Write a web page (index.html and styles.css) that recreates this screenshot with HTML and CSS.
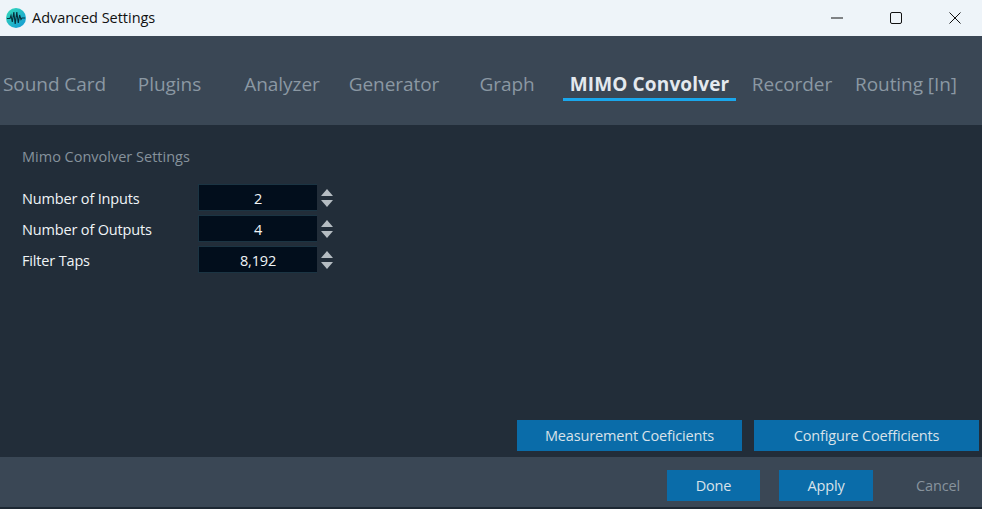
FILE: index.html
```html
<!DOCTYPE html>
<html lang="en">
<head>
<meta charset="utf-8">
<title>Advanced Settings</title>
<link rel="stylesheet" href="styles.css">
</head>
<body>
<div class="window">
  <header class="titlebar">
    <svg class="app-icon" width="20" height="20" viewBox="0 0 20 20">
      <defs><linearGradient id="g" x1="0" y1="0" x2="1" y2="1"><stop offset="0" stop-color="#35dcb8"/><stop offset="1" stop-color="#1296d6"/></linearGradient></defs>
      <circle cx="10" cy="10" r="10" fill="url(#g)"/>
      <path d="M1 10.5H4L5 7.5 6.3 14 7.8 4 9.2 16 10.8 4 12.3 15 13.6 7 15 11.5 16 10H19" fill="none" stroke="#06303c" stroke-width="1.1"/>
    </svg>
    <span class="title">Advanced Settings</span>
    <div class="win-controls">
      <svg class="win-btn" width="12" height="12" viewBox="0 0 12 12"><path d="M0 6H12" stroke="#111" fill="none"/></svg>
      <svg class="win-btn" width="12" height="12" viewBox="0 0 12 12"><rect x=".5" y=".5" width="11" height="11" rx="1.5" stroke="#111" fill="none"/></svg>
      <svg class="win-btn" width="12" height="12" viewBox="0 0 12 12"><path d="M.5 .5L11.5 11.5M11.5 .5L.5 11.5" stroke="#111" fill="none"/></svg>
    </div>
  </header>
  <nav class="tabs">
    <div class="tab"><span>Sound Card</span></div>
    <div class="tab"><span>Plugins</span></div>
    <div class="tab"><span>Analyzer</span></div>
    <div class="tab"><span>Generator</span></div>
    <div class="tab"><span>Graph</span></div>
    <div class="tab active"><span>MIMO Convolver</span></div>
    <div class="tab"><span>Recorder</span></div>
    <div class="tab"><span>Routing [In]</span></div>
  </nav>
  <main class="content">
    <h2 class="section">Mimo Convolver Settings</h2>
    <div class="fields">
      <div class="field">
        <label class="label">Number of Inputs</label>
        <div class="value">2</div>
        <div class="spin"><i class="up"></i><i class="down"></i></div>
      </div>
      <div class="field">
        <label class="label">Number of Outputs</label>
        <div class="value">4</div>
        <div class="spin"><i class="up"></i><i class="down"></i></div>
      </div>
      <div class="field">
        <label class="label">Filter Taps</label>
        <div class="value">8,192</div>
        <div class="spin"><i class="up"></i><i class="down"></i></div>
      </div>
    </div>
    <div class="actions">
      <button class="btn wide">Measurement Coeficients</button>
      <button class="btn wide">Configure Coefficients</button>
    </div>
  </main>
  <footer class="footer">
    <button class="btn done">Done</button>
    <button class="btn apply">Apply</button>
    <button class="cancel">Cancel</button>
  </footer>
</div>
</body>
</html>
```
FILE: styles.css
```css
* { box-sizing: border-box; }
html, body { margin: 0; padding: 0; height: 100%; overflow: hidden; }
body { background: #1d2833; font-family: "Open Sans", "Noto Sans", sans-serif; }
.window { height: 509px; display: flex; flex-direction: column; }
.titlebar { height: 36px; flex: none; background: #eef4f9; display: flex; align-items: center; padding-left: 6px; color: #111; }
.app-icon { flex: none; }
.title { margin-left: 6px; margin-bottom: 1px; font-size: 14.5px; letter-spacing: -0.03px; }
.win-controls { margin-left: auto; display: flex; align-items: center; padding-right: 21px; }
.win-btn { margin-left: 47px; }
.tabs { height: 89px; flex: none; background: #3a4755; display: grid; grid-template-columns: 109px 121px 104px 120px 106px 179px 106px 122px; padding-top: 31px; align-items: start; }
.tab { display: flex; justify-content: center; font-size: 19px; line-height: 34px; color: #8b98a3; letter-spacing: -0.06px; white-space: nowrap; }
.tab span { padding: 0 7px; height: 34px; }
.tab.active { color: #e4e9ee; font-weight: 700; letter-spacing: 0.15px; }
.tab.active span { border-bottom: 3px solid #1aa7ec; }
.content { height: 332px; flex: none; background: #222d39; padding: 22px 3px 6px 22px; display: flex; flex-direction: column; }
.section { margin: 0; font-size: 14.5px; font-weight: 400; line-height: 20px; color: #86929c; }
.fields { margin-top: 17px; display: flex; flex-direction: column; gap: 4px; }
.field { display: flex; align-items: center; height: 27px; }
.label { width: 176px; font-size: 14.5px; line-height: 27px; padding-top: 2px; color: #f0f4f7; letter-spacing: -0.16px; }
.value { width: 119px; height: 27px; background: #020e1c; border: 1px solid #1b3443; border-right: 0; color: #f0f4f7; font-size: 14.5px; line-height: 27px; text-align: center; letter-spacing: -0.16px; }
.spin { margin-left: 4px; width: 13px; display: flex; flex-direction: column; gap: 4px; }
.spin i { display: block; width: 0; height: 0; border-left: 6.5px solid transparent; border-right: 6.5px solid transparent; }
.spin .up { border-bottom: 7px solid #b5bcc2; }
.spin .down { border-top: 7px solid #b5bcc2; }
.actions { margin-top: auto; display: flex; justify-content: flex-end; gap: 12px; }
.btn { border: 0; background: #0a6ca9; color: #d8e2ea; font-family: inherit; font-size: 14.5px; letter-spacing: -0.16px; padding: 0; height: 31px; }
.wide { width: 225px; }
.footer { height: 50px; flex: none; background: #3a4755; display: flex; align-items: flex-start; padding-top: 13px; padding-left: 667px; }
.done { width: 93px; }
.apply { width: 94px; margin-left: 19px; }
.cancel { width: 88px; height: 31px; border: 0; background: none; padding: 0; font-family: inherit; font-size: 14.5px; letter-spacing: -0.16px; color: #87939d; margin-left: 21px; }
```
